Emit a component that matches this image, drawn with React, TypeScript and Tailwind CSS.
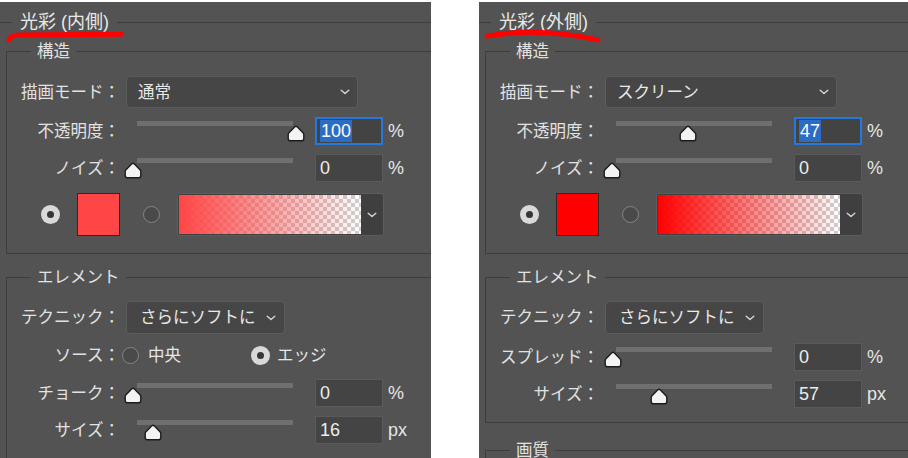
import type { ReactNode } from 'react';

const FONT = "font-['Liberation_Sans','Noto_Sans_CJK_JP',sans-serif]";

function Chevron() {
  return (
    <svg width="10" height="6" viewBox="0 0 10 6" className="shrink-0">
      <path d="M1.2 1.2L5 4.6l3.8-3.4" fill="none" stroke="#d6d6d6" strokeWidth="1.4" strokeLinecap="round" strokeLinejoin="round" />
    </svg>
  );
}

function Thumb({ left }: { left: number }) {
  return (
    <svg width="18" height="17" viewBox="0 0 18 17" className="absolute top-[8px]" style={{ left }}>
      <path
        d="M9 1.2C9.6 1.2 10 1.6 10.4 2L16 7.8C16.5 8.3 16.8 8.9 16.8 9.6V13.4C16.8 14.8 15.8 15.8 14.4 15.8H3.6C2.2 15.8 1.2 14.8 1.2 13.4V9.6C1.2 8.9 1.5 8.3 2 7.8L7.6 2C8 1.6 8.4 1.2 9 1.2Z"
        fill="#f3f3f3"
        stroke="#1c1c1c"
        strokeWidth="1.4"
      />
    </svg>
  );
}

function Label({ children }: { children: ReactNode }) {
  return <div className="w-[113px] shrink-0 text-right text-[16.5px] leading-none text-[#e2e2e2]">{children}</div>;
}

function Radio({ checked, className = '' }: { checked?: boolean; className?: string }) {
  if (checked) {
    return (
      <div className={`flex h-[19px] w-[19px] shrink-0 items-center justify-center rounded-full bg-[#d9d9d9] ${className}`}>
        <div className="h-[7px] w-[7px] rounded-full bg-[#363636]" />
      </div>
    );
  }
  return <div className={`h-[17px] w-[17px] shrink-0 rounded-full border-[1.5px] border-[#858585] bg-[#4a4a4a] ${className}`} />;
}

function NumberBox({ value, focused }: { value: string; focused?: boolean }) {
  if (focused) {
    return (
      <div className="flex h-[28px] w-[68px] shrink-0 items-center border-2 border-[#2577e2] bg-[#434343] pl-[3px]">
        <span className="bg-[#2d6cc3] px-[1px] text-[18px] leading-[22px] text-white">{value}</span>
      </div>
    );
  }
  return (
    <div className="flex h-[28px] w-[68px] shrink-0 items-center border border-[#5a5a5a] bg-[#444444] pl-[4px] text-[18px] text-[#ececec]">
      {value}
    </div>
  );
}

function SliderRow({
  label,
  thumb,
  value,
  unit,
  focused,
  className = '',
}: {
  label: string;
  thumb: number;
  value: string;
  unit: string;
  focused?: boolean;
  className?: string;
}) {
  return (
    <div className={`flex h-[28px] items-center ${className}`}>
      <Label>{label}</Label>
      <div className="relative h-[28px] w-[195px] shrink-0">
        <div className="absolute left-[17px] top-[4px] h-[5px] w-[156px] bg-[#6f6f6f]" />
        <Thumb left={thumb} />
      </div>
      <NumberBox value={value} focused={focused} />
      <span className="ml-[5px] text-[18px] text-[#e6e6e6]">{unit}</span>
    </div>
  );
}

function Heading({ title }: { title: string }) {
  return (
    <div className="mt-[8px] flex h-[24px] items-center">
      <div className="h-px w-[12px] bg-[#3d3d3d]" />
      <span className="mx-[8px] text-[18px] leading-[24px] text-[#e8e8e8]">{title}</span>
      <div className="h-px flex-1 bg-[#3d3d3d]" />
    </div>
  );
}

function Group({ legend, className, children }: { legend: string; className: string; children?: ReactNode }) {
  return (
    <fieldset className={`ml-[6px] border border-r-0 border-[#3d3d3d] ${className}`}>
      <legend className="ml-[24px] px-[6px] text-[16.5px] leading-[20px] text-[#e2e2e2]">{legend}</legend>
      {children}
    </fieldset>
  );
}

function Structure({ mode, opacityThumb, opacity, swatch, gradientFrom }: {
  mode: string;
  opacityThumb: number;
  opacity: string;
  swatch: string;
  gradientFrom: string;
}) {
  return (
    <Group legend="構造" className="mt-[7px] pb-[17px] pt-[15px]">
      <div className="flex h-[32px] items-center">
        <Label>描画モード：</Label>
        <div className="ml-[6px] flex h-[32px] w-[232px] items-center justify-between rounded-[4px] border border-[#5c5c5c] bg-[#464646] pl-[11px] pr-[7px] text-[16.5px] text-[#e8e8e8]">
          <span>{mode}</span>
          <Chevron />
        </div>
      </div>
      <SliderRow label="不透明度：" thumb={opacityThumb} value={opacity} unit="%" focused className="mt-[9px]" />
      <SliderRow label="ノイズ：" thumb={4} value="0" unit="%" className="mt-[9px]" />
      <div className="mt-[11px] flex h-[43px] items-center">
        <Radio checked className="ml-[34px]" />
        <div className={`ml-[17px] h-[43px] w-[43px] shrink-0 border border-[#2a2a2a] ${swatch}`} />
        <Radio className="ml-[23px]" />
        <div className="ml-[17px] flex h-[43px] w-[207px] shrink-0 rounded-[3px] border border-[#5c5c5c] bg-[#3f3f3f] p-[1px]">
          <div className="h-full w-[182px] bg-[repeating-conic-gradient(#cfcfcf_0%_25%,#ffffff_0%_50%)] bg-[length:8px_8px]">
            <div className={`h-full w-full bg-linear-to-r to-[#ffffff00] ${gradientFrom}`} />
          </div>
          <div className="flex flex-1 items-center justify-center">
            <Chevron />
          </div>
        </div>
      </div>
    </Group>
  );
}

function Technique() {
  return (
    <div className="flex h-[33px] items-center">
      <Label>テクニック：</Label>
      <div className="ml-[6px] flex h-[33px] w-[159px] items-center justify-between rounded-[4px] border border-[#5c5c5c] bg-[#464646] pl-[13px] pr-[8px] text-[16.5px] text-[#e8e8e8]">
        <span>さらにソフトに</span>
        <Chevron />
      </div>
    </div>
  );
}

function InnerGlow() {
  return (
    <div className="relative h-[456px] w-[431px] shrink-0 overflow-hidden bg-[#535353]">
      <Heading title="光彩 (内側)" />
      <Structure mode="通常" opacityThumb={167} opacity="100" swatch="bg-[#ff4545]" gradientFrom="from-[#ff4545]" />
      <Group legend="エレメント" className="mt-[13px] pb-[30px] pt-[14px]">
        <Technique />
        <div className="mt-[7px] flex h-[28px] items-center">
          <Label>ソース：</Label>
          <Radio className="ml-[2px] h-[15px] w-[15px]" />
          <span className="ml-[9px] text-[16.5px] text-[#e6e6e6]">中央</span>
          <Radio checked className="ml-[70px]" />
          <span className="ml-[7px] text-[16.5px] text-[#e6e6e6]">エッジ</span>
        </div>
        <SliderRow label="チョーク：" thumb={4} value="0" unit="%" className="mt-[10px]" />
        <SliderRow label="サイズ：" thumb={24} value="16" unit="px" className="mt-[9px]" />
      </Group>
      <svg className="absolute left-0 top-0" width="140" height="50" viewBox="0 0 140 50">
        <path d="M9 38Q10.5 33 20 33L121 32.3" fill="none" stroke="#ff0000" strokeWidth="5" strokeLinecap="round" strokeLinejoin="round" />
      </svg>
    </div>
  );
}

function OuterGlow() {
  return (
    <div className="relative h-[456px] w-[429px] shrink-0 overflow-hidden bg-[#535353]">
      <Heading title="光彩 (外側)" />
      <Structure mode="スクリーン" opacityThumb={80} opacity="47" swatch="bg-[#ff0000]" gradientFrom="from-[#ff0000]" />
      <Group legend="エレメント" className="mt-[13px] pb-[14px] pt-[14px]">
        <Technique />
        <SliderRow label="スプレッド：" thumb={5} value="0" unit="%" className="mt-[9px]" />
        <SliderRow label="サイズ：" thumb={51} value="57" unit="px" className="mt-[9px]" />
      </Group>
      <Group legend="画質" className="mt-[17px] h-[60px]" />
      <svg className="absolute left-0 top-0" width="140" height="50" viewBox="0 0 140 50">
        <path d="M8 34Q60 25 119 38" fill="none" stroke="#ff0000" strokeWidth="5" strokeLinecap="round" />
      </svg>
    </div>
  );
}

export default function App() {
  return (
    <div className={`flex h-[458px] w-[908px] gap-[48px] overflow-hidden bg-white pt-[2px] ${FONT}`}>
      <InnerGlow />
      <OuterGlow />
    </div>
  );
}
